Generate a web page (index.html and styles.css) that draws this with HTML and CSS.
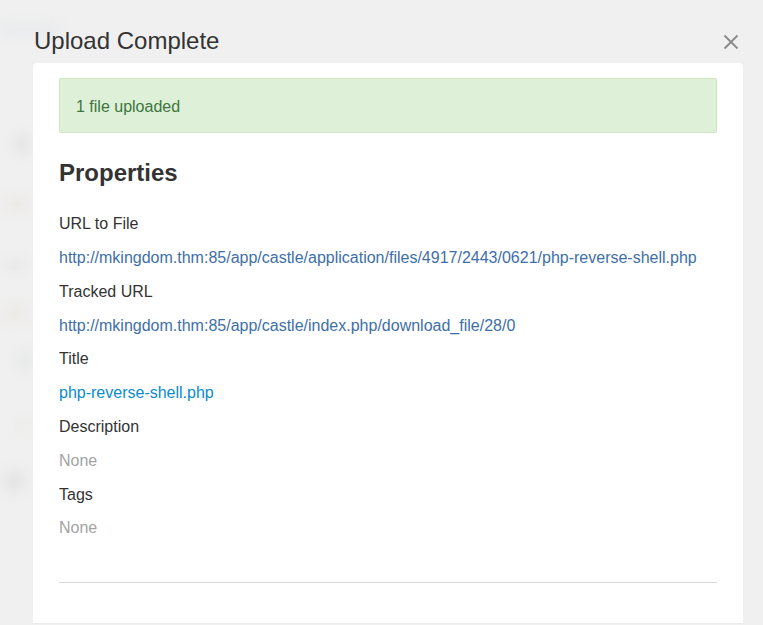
FILE: index.html
```html
<!DOCTYPE html>
<html>
<head>
<meta charset="utf-8">
<title>Upload Complete</title>
<link rel="stylesheet" href="styles.css">
</head>
<body>
<div class="backdrop">
  <div class="blob b1"></div>
  <div class="blob b2"></div>
  <div class="blob b3"></div>
  <div class="blob b4"></div>
  <div class="blob b5"></div>
  <div class="blob b6"></div>
  <div class="blob b7"></div>
  <div class="blob b8"></div>
</div>
<div class="modal">
  <div class="modal-header">
    <h2 class="modal-title">Upload Complete</h2>
    <button class="close" aria-label="Close">
      <svg width="16" height="16" viewBox="0 0 16 16"><path d="M1.5 1.5 L14.5 14.5 M14.5 1.5 L1.5 14.5" stroke="#8a8a8a" stroke-width="1.8" fill="none"/></svg>
    </button>
  </div>
  <div class="modal-body">
    <div class="alert">1 file uploaded</div>
    <h3 class="props-title">Properties</h3>
    <dl class="props">
      <dt>URL to File</dt>
      <dd><a class="url" href="#">http://mkingdom.thm:85/app/castle/application/files/4917/2443/0621/php-reverse-shell.php</a></dd>
      <dt>Tracked URL</dt>
      <dd><a class="url" href="#">http://mkingdom.thm:85/app/castle/index.php/download_file/28/0</a></dd>
      <dt>Title</dt>
      <dd><a class="title-link" href="#">php-reverse-shell.php</a></dd>
      <dt>Description</dt>
      <dd class="none">None</dd>
      <dt>Tags</dt>
      <dd class="none">None</dd>
    </dl>
    <hr class="divider">
  </div>
</div>
</body>
</html>
```
FILE: styles.css
```css
html, body {
  margin: 0;
  padding: 0;
  height: 100%;
  overflow: hidden;
}
body {
  background: #f0f0f0;
  font-family: "Liberation Sans", Arial, Helvetica, sans-serif;
  color: #333;
}
.backdrop {
  display: flex;
  flex-direction: column;
  padding-top: 20px;
  filter: blur(6px);
}
.blob {
  border-radius: 4px;
}
.b1 { width: 60px; height: 10px; margin-top: 5px; background: #e7e9eb; }
.b2 { width: 12px; height: 18px; margin: 100px 0 0 16px; background: #e2e2e2; }
.b3 { width: 22px; height: 14px; margin: 44px 0 0 6px; background: #ebe9e5; }
.b4 { width: 22px; height: 8px; margin: 50px 0 0 4px; background: #e5e5e5; }
.b5 { width: 22px; height: 14px; margin: 38px 0 0 4px; background: #ece9e3; }
.b6 { width: 10px; height: 20px; margin: 30px 0 0 20px; background: #e4e5e6; }
.b7 { width: 14px; height: 10px; margin: 50px 0 0 16px; background: #ecebe8; }
.b8 { width: 20px; height: 20px; margin: 40px 0 0 4px; background: #e4e4e4; }

.modal {
  position: absolute;
  top: 0;
  left: 33px;
  width: 710px;
  display: flex;
  flex-direction: column;
}
.modal-header {
  display: flex;
  align-items: flex-start;
  justify-content: space-between;
  height: 63px;
  padding-top: 28px;
  box-sizing: border-box;
}
.modal-title {
  margin: 0;
  font-size: 24px;
  font-weight: normal;
  line-height: 26px;
  color: #333;
  padding-left: 1px;
}
.close {
  background: none;
  border: 0;
  padding: 0;
  margin-right: 4px;
  margin-top: 6px;
  width: 16px;
  height: 16px;
  display: flex;
  cursor: pointer;
}
.modal-body {
  background: #fff;
  border-radius: 4px 4px 0 0;
  border-bottom: 1px solid #ececec;
  padding: 15px 26px 0;
  height: 561px;
  box-sizing: border-box;
  font-size: 16px;
  line-height: 1.42857;
}
.alert {
  background: #dff0d8;
  border: 1px solid #d0e6c2;
  color: #3c763d;
  padding: 17px 16px 13px;
  border-radius: 2px;
}
.props-title {
  margin: 27px 0 0;
  font-size: 24px;
  line-height: 26.4px;
  font-weight: bold;
  color: #333;
}
.props {
  margin: 27px 0 0;
}
.props dt,
.props dd {
  margin: 0 0 10.95px;
  padding: 0;
}
.props a {
  text-decoration: none;
}
.url {
  color: #3e6fa8;
}
.title-link {
  color: #0a8bd0;
}
.none {
  color: #a3a3a3;
}
.divider {
  border: 0;
  border-top: 1px solid #d9d9d9;
  margin: 42px 0 0;
}
```
